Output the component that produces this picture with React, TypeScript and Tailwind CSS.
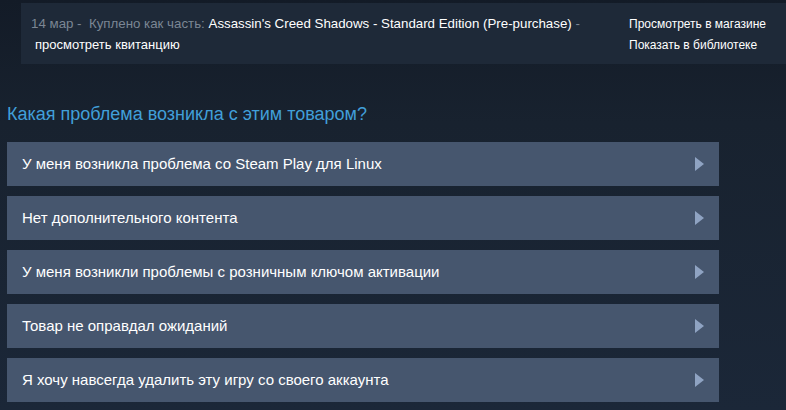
import React from "react";

const rows = [
  "У меня возникла проблема со Steam Play для Linux",
  "Нет дополнительного контента",
  "У меня возникли проблемы с розничным ключом активации",
  "Товар не оправдал ожиданий",
  "Я хочу навсегда удалить эту игру со своего аккаунта",
];

export default function App() {
  return (
    <div
      className="w-[786px] h-[410px] overflow-hidden bg-[linear-gradient(180deg,#131b27_0%,#18222f_30%,#1b2738_100%)] pt-[3px]"
      style={{ fontFamily: '"Liberation Sans", Arial, sans-serif' }}
    >
      <div className="ml-[21px] h-[61px] bg-[#1e2938] flex">
        <div className="w-[598px] pl-[10px] pt-[10px] leading-[21px]">
          <div className="whitespace-nowrap text-[13.3px]">
            <span className="text-[#7b8694]">14 мар -&nbsp; Куплено как часть: </span>
            <span className="text-white">Assassin's Creed Shadows - Standard Edition (Pre-purchase)</span>
            <span className="text-[#7b8694]"> -</span>
          </div>
          <div className="pl-[4px] text-[13px] text-white">просмотреть квитанцию</div>
        </div>
        <div className="pt-[11px] pl-[10px] text-[12px] leading-[21px] text-white">
          <div>Просмотреть в магазине</div>
          <div>Показать в библиотеке</div>
        </div>
      </div>
      <div className="pl-[7px] pt-[37px] text-[18px] leading-[26px] text-[#419fd9]">
        Какая проблема возникла с этим товаром?
      </div>
      <div className="pl-[7px] pt-[15px] flex flex-col gap-[10px]">
        {rows.map((r) => (
          <div
            key={r}
            className="w-[712px] h-[44px] bg-[#46566e] flex items-center justify-between pl-[15px] pr-[15px]"
          >
            <span className="text-[15px] text-white">{r}</span>
            <svg width="9" height="14" viewBox="0 0 9 14">
              <polygon points="0,0 9,7 0,14" fill="#8fa3c2" />
            </svg>
          </div>
        ))}
      </div>
    </div>
  );
}
